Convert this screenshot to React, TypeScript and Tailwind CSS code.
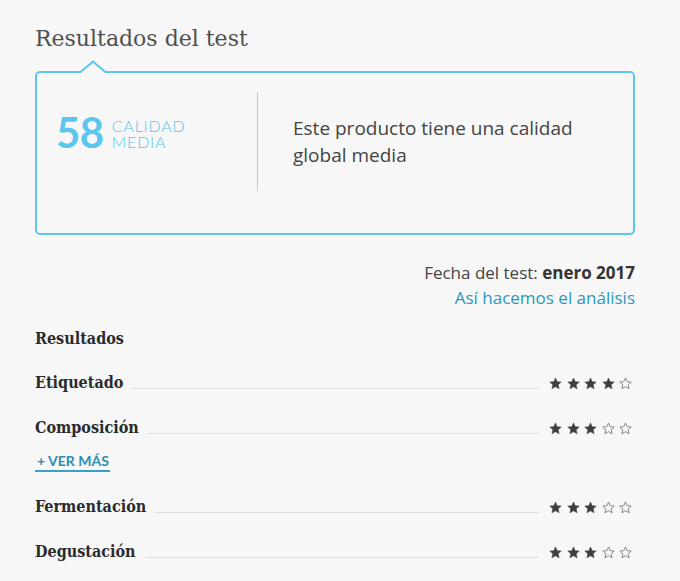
import React from "react";

const Star = ({ filled }: { filled: boolean }) => (
  <svg width="13" height="13" viewBox="0 0 24 24" className="block">
    <path
      d="M12 1.8l3.1 6.9 7.4.7-5.6 5 1.7 7.3L12 17.9l-6.6 3.8 1.7-7.3-5.6-5 7.4-.7z"
      fill={filled ? "#3f3f3f" : "none"}
      stroke={filled ? "#3f3f3f" : "#777"}
      strokeWidth={filled ? 1 : 1.6}
      strokeLinejoin="round"
    />
  </svg>
);

const Stars = ({ n }: { n: number }) => (
  <div className="flex items-center gap-[4.5px] pr-[3px] pl-[10px] self-center">
    {[0, 1, 2, 3, 4].map((i) => (
      <Star key={i} filled={i < n} />
    ))}
  </div>
);

const Row = ({ label, n, mt }: { label: string; n: number; mt: string }) => (
  <div className={`flex items-center h-[24px] ${mt}`}>
    <span className="font-['DejaVu_Serif_Condensed','DejaVu_Serif',serif] font-bold text-[16px] leading-[24px] text-[#2b2b2b] whitespace-nowrap">
      {label}
    </span>
    <div className="flex-1 ml-[9px] h-[1px] bg-[#dcdcdc] mt-[11px]" />
    <Stars n={n} />
  </div>
);

export default function App() {
  return (
    <div className="min-h-[581px] bg-[#f7f7f7] pl-[35px] pr-[45px] pt-[24px] font-['Open_Sans',sans-serif]">
      <h1 className="font-['DejaVu_Serif',serif] text-[22px] leading-[30px] text-[#505050]">
        Resultados del test
      </h1>
      <div className="relative mt-[17px] h-[164px] border-2 border-[#5cc6ee] rounded-[5px] flex items-start">
        <svg
          width="26"
          height="14"
          viewBox="0 0 26 14"
          className="absolute left-[43px] top-[-13px]"
        >
          <path d="M0 13 L13 1 L26 13 Z" fill="#f7f7f7" />
          <path d="M0 12.5 L13 1.5 L26 12.5" fill="none" stroke="#5cc6ee" strokeWidth="2" />
        </svg>
        <div className="w-[220px] pl-[19px] pt-[39px] flex items-start">
          <span className="font-['Lato',sans-serif] text-[42px] leading-[40px] font-bold text-[#5cc6ee] tracking-[-0.5px]">58</span>
          <div className="ml-[8px] mt-[6px] font-['Lato',sans-serif] text-[16px] leading-[16px] font-light text-[#5cc6ee] tracking-[0.8px]">
            CALIDAD
            <br />
            MEDIA
          </div>
        </div>
        <div className="w-[1px] h-[99px] mt-[19px] bg-[#c8c8c8]" />
        <div className="ml-[35px] pt-[42px] text-[19px] leading-[27px] text-[#444]">
          Este producto tiene una calidad
          <br />
          global media
        </div>
      </div>
      <div className="mt-[26px] text-right text-[17px] leading-[24px] text-[#444]">
        Fecha del test: <span className="font-bold text-[#333]">enero 2017</span>
      </div>
      <div className="text-right text-[17px] leading-[25px] text-[#2b98bf]">
        Así hacemos el análisis
      </div>
      <div className="mt-[17px] h-[24px] font-['DejaVu_Serif_Condensed','DejaVu_Serif',serif] font-bold text-[16px] leading-[24px] text-[#2b2b2b]">
        Resultados
      </div>
      <Row label="Etiquetado" n={4} mt="mt-[20px]" />
      <Row label="Composición" n={3} mt="mt-[21px]" />
      <div className="mt-[12px] flex">
        <span className="font-['Lato',sans-serif] text-[14px] leading-[17px] font-bold text-[#2b8fb3] border-b-2 border-[#3aa0c4] pb-[1px] pl-[2px] pr-[1px]">
          + VER MÁS
        </span>
      </div>
      <Row label="Fermentación" n={3} mt="mt-[23px]" />
      <Row label="Degustación" n={3} mt="mt-[21px]" />
    </div>
  );
}
